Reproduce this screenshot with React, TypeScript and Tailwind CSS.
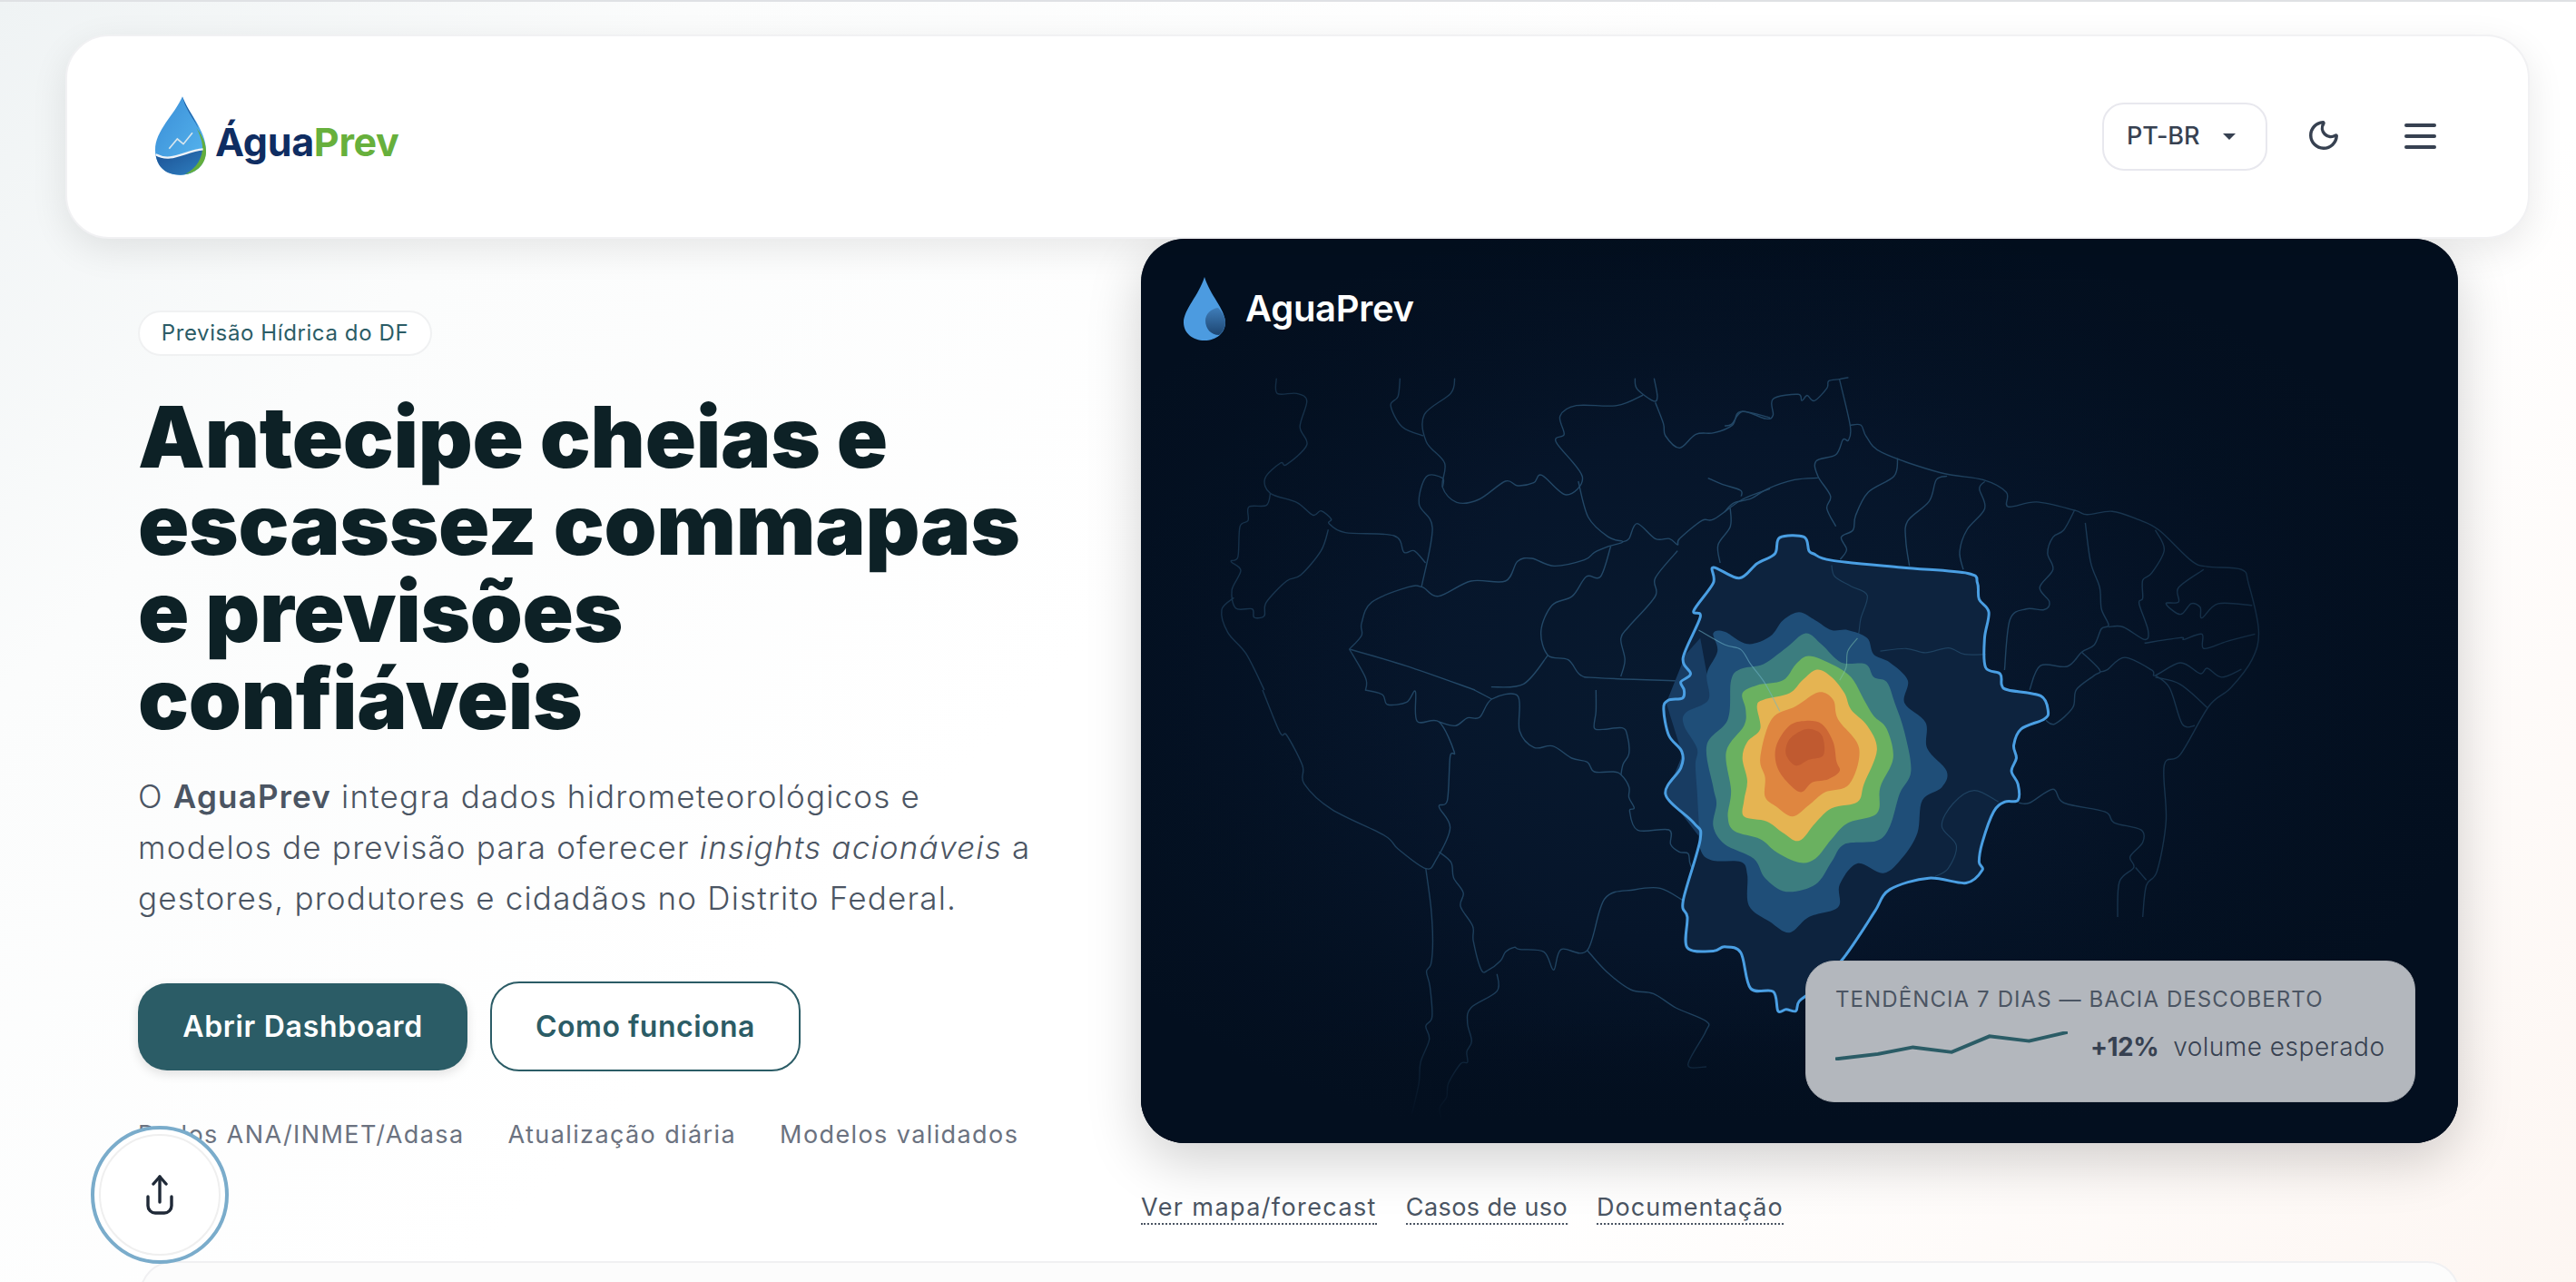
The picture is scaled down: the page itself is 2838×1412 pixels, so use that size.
import { Moon } from "lucide-react";

type Pt = [number, number];

// catmull-rom through the traced points
const smooth = (pts: Pt[], closed = false) => {
  const n = pts.length;
  const at = (i: number) => (closed ? pts[(i + n) % n] : pts[Math.max(0, Math.min(n - 1, i))]);
  let d = `M${pts[0][0]} ${pts[0][1]}`;
  const last = closed ? n : n - 1;
  for (let i = 0; i < last; i++) {
    const p0 = at(i - 1);
    const p1 = at(i);
    const p2 = at(i + 1);
    const p3 = at(i + 2);
    const c1x = p1[0] + (p2[0] - p0[0]) / 6;
    const c1y = p1[1] + (p2[1] - p0[1]) / 6;
    const c2x = p2[0] - (p3[0] - p1[0]) / 6;
    const c2y = p2[1] - (p3[1] - p1[1]) / 6;
    d += ` C${c1x.toFixed(1)} ${c1y.toFixed(1)} ${c2x.toFixed(1)} ${c2y.toFixed(1)} ${p2[0]} ${p2[1]}`;
  }
  return closed ? d + "Z" : d;
};

const westLines: Pt[][] = [
  [[350,470],[352,520],[400,520],[425,545],[408,630],[425,690],[375,755],[360,750],[322,800],[335,850],[400,880],[440,922],[460,908],[485,935],[480,950],[520,980],[640,990],[665,1045],[690,1040],[718,1080]],
  [[335,850],[325,890],[282,895],[280,940],[260,960],[255,1060],[238,1075],[262,1105],[240,1170],[250,1230],[290,1232],[295,1260],[320,1255],[325,1210],[375,1140],[410,1120],[460,1040],[478,970]],
  [[245,1195],[215,1235],[230,1310],[275,1380],[320,1500]],
  [[655,470],[650,530],[632,560],[660,630],[712,660]],
  [[790,470],[780,520],[715,590],[720,680],[765,750],[760,830],[795,880],[850,870],[915,810],[945,825],[985,815],[1005,790],[1065,855],[1105,795],[1040,680],[1060,655],[1050,595],[1090,560],[1190,560],[1255,525]],
  [[760,830],[760,800],[720,795],[702,885],[735,965],[708,1160]],
  [[1235,470],[1240,505],[1280,545],[1290,530],[1282,470]],
  [[1285,550],[1305,620],[1310,660],[1345,700],[1385,655],[1430,650],[1475,625],[1495,580],[1568,600]],
  [[1095,810],[1120,930],[1170,995],[1205,1010],[1170,1025],[1135,1045],[1110,1070],[1035,1090],[980,1065],[945,1075],[915,1140],[830,1140],[750,1190],[710,1160],[675,1160],[585,1210],[560,1280],[560,1320],[530,1365]],
  [[1205,1010],[1220,1000],[1240,950],[1285,1000],[1320,1000],[1340,1020],[1345,1000],[1400,940],[1430,935],[1500,870],[1568,835]],
  [[1175,1025],[1150,1125],[1115,1125],[1080,1190],[1030,1220],[1003,1305],[1020,1385],[1070,1400],[1100,1450],[1145,1460],[1345,1470]],
  [[530,1365],[670,1420],[840,1500]],
  [[530,1365],[570,1460],[570,1500]],
  [[1020,1385],[960,1480],[880,1490]],
  [[1340,1040],[1285,1130],[1285,1190],[1220,1290],[1200,1330],[1210,1400],[1200,1455]],
  [[1470,900],[1470,960],[1440,1020],[1445,1080]],
  [[1415,800],[1450,820],[1495,840],[1497,860]],
];

const southLines: Pt[][] = [
  [[290,0],[340,140],[360,150],[405,250],[410,310],[490,395],[640,480],[680,525],[760,590],[790,560],[830,455],[798,385],[822,365],[830,220],[842,205],[798,105],[735,103],[730,5],[705,40],[650,48],[635,15],[585,0]],
  [[798,105],[845,118],[880,92],[915,90],[950,30],[1025,20],[1030,135],[1072,190],[1125,185],[1180,225],[1225,238],[1245,270],[1300,270],[1322,280],[1345,320],[1345,355],[1360,390],[1347,400],[1370,463],[1460,462],[1465,510],[1490,535],[1515,540],[1520,570],[1527,590]],
  [[1322,280],[1328,245],[1345,210],[1340,150],[1325,125],[1270,130],[1245,125],[1250,70],[1250,0]],
  [[760,590],[775,720],[780,830],[775,905],[762,930],[772,980],[778,1080],[760,1110],[770,1155],[745,1230],[740,1300],[720,1400]],
  [[798,535],[833,570],[840,620],[868,670],[860,715],[895,780],[897,830],[920,925],[940,925],[975,895],[990,865],[1015,850],[1030,857],[1100,865],[1128,925],[1150,857],[1225,860],[1275,690],[1360,660],[1435,655],[1500,695]],
  [[1225,860],[1280,930],[1350,990],[1415,1003],[1480,1050],[1568,1095],[1565,1130],[1515,1238],[1568,1245]],
  [[965,938],[965,995],[890,1050],[880,1100],[892,1160],[878,1195],[880,1230],[860,1235],[825,1300],[820,1345],[800,1380],[805,1415]],
  [[950,30],[900,0]],
];

const eastLines: Pt[][] = [
  [[345,65],[320,70],[290,75],[285,95],[250,130],[230,115],[215,130],[205,112],[135,125],[135,170],[115,180],[50,160],[20,195],[0,200]],
  [[320,70],[350,200],[345,240],[330,238],[310,280],[255,298],[260,340],[295,395],[285,430],[310,480]],
  [[350,198],[380,198],[395,230],[440,275],[600,330],[720,350],[785,385],[790,425],[870,412],[975,435],[1010,447],[1080,438],[1150,460],[1210,490],[1300,575],[1345,592],[1440,600],[1460,640],[1488,770],[1470,850],[1410,930],[1350,980],[1270,1115],[1225,1145],[1230,1300],[1205,1440],[1175,1480],[1165,1568]],
  [[260,345],[195,350],[120,375],[75,402],[25,415],[0,440]],
  [[482,290],[472,340],[400,385],[365,450],[358,490],[325,510],[340,545],[322,572]],
  [[620,340],[590,350],[570,410],[510,465],[505,520],[515,590]],
  [[725,355],[710,375],[725,430],[675,490],[655,550],[665,600]],
  [[975,435],[945,490],[915,510],[900,555],[915,600],[878,650],[905,690],[890,712],[840,710],[795,740],[780,880]],
  [[1005,470],[1020,580],[1045,650],[1050,710],[1070,755],[1050,765],[1030,810],[995,830],[955,870],[880,868],[850,935]],
  [[1200,490],[1225,545],[1190,610],[1165,630],[1165,680],[1155,695],[1180,770],[1170,795],[1110,760],[1070,760]],
  [[1335,600],[1265,650],[1265,690],[1230,695],[1270,725],[1300,695],[1325,705],[1330,735],[1375,695],[1470,700]],
  [[1170,805],[1270,790],[1280,795],[1330,780],[1335,820],[1400,800],[1478,780]],
  [[995,830],[1045,880],[1030,895],[980,935],[970,985],[920,1030],[895,1020]],
  [[1045,885],[1065,880],[1115,845],[1190,880],[1200,895],[1270,860],[1325,890],[1345,875],[1385,900],[1440,878]],
  [[1200,895],[1240,930],[1275,1030],[1310,1035]],
  [[1200,900],[1270,920],[1345,985]],
  [[820,1250],[850,1250],[915,1212],[945,1250],[1060,1275],[1085,1305],[1160,1325],[1165,1360],[1130,1400],[1140,1430],[1100,1470],[1095,1568]],
  [[1145,1430],[1175,1465]],
];

const basin: Pt[] = [[590,90],[665,88],[680,130],[695,140],[750,160],[965,182],[1170,200],[1200,230],[1205,280],[1235,320],[1222,400],[1225,490],[1270,510],[1275,545],[1295,560],[1395,578],[1418,625],[1405,650],[1335,680],[1312,730],[1320,770],[1305,810],[1325,850],[1325,900],[1285,905],[1250,935],[1215,1030],[1205,1090],[1215,1115],[1165,1155],[1050,1140],[930,1175],[885,1240],[840,1310],[780,1395],[700,1480],[650,1520],[640,1550],[610,1545],[585,1550],[570,1490],[500,1480],[470,1370],[420,1352],[385,1365],[305,1355],[305,1260],[292,1210],[345,1020],[325,970],[238,882],[285,800],[288,750],[248,700],[232,620],[245,592],[290,585],[295,560],[285,535],[315,510],[292,460],[345,335],[325,315],[385,230],[385,182],[465,215],[520,170],[575,140]];

const basinInner: Pt[][] = [
  [[750,175],[760,210],[810,240],[860,268],[840,340],[830,400],[800,440],[775,530]],
  [[900,440],[980,432],[1040,445],[1110,430],[1160,450],[1225,450]],
  [[1265,905],[1190,870],[1125,910],[1090,980],[1135,1040],[1110,1110],[1070,1135]],
];

const contours: { fill: string; pts: Pt[] }[] = [
  { fill: "#1f4e78", pts: [[650,320],[700,345],[750,375],[800,375],[860,400],[880,450],[930,475],[985,530],[975,600],[1040,660],[1045,740],[1105,810],[1090,860],[1030,900],[1015,1000],[970,1075],[910,1125],[830,1095],[775,1160],[770,1230],[680,1260],[620,1308],[560,1275],[495,1225],[490,1130],[470,1090],[380,1085],[345,1050],[340,960],[335,870],[330,790],[335,740],[295,670],[300,630],[370,590],[365,510],[398,440],[385,385],[420,380],[490,418],[560,395],[600,345]] },
  { fill: "#3c7d7f", pts: [[670,385],[720,420],[780,475],[855,480],[880,520],[920,535],[945,600],[975,690],[995,810],[960,880],[930,980],[890,1025],[790,1035],[750,1090],[700,1160],[610,1182],[545,1140],[510,1080],[420,1035],[385,980],[395,910],[385,860],[365,730],[430,650],[440,530],[470,495],[540,480],[610,430]] },
  { fill: "#6ab160", pts: [[680,455],[750,480],[810,520],[850,590],[880,640],[920,680],[940,770],[900,860],[890,940],[800,970],[750,1020],[700,1080],[650,1092],[580,1060],[530,1020],[450,995],[430,950],[440,870],[425,750],[480,670],[485,620],[475,570],[520,545],[600,530],[640,480]] },
  { fill: "#e5b452", pts: [[705,497],[750,520],[790,570],[810,620],[860,670],[890,745],[850,850],[830,905],[750,925],[700,970],[650,1025],[600,1000],[550,965],[480,950],[480,900],[490,840],[475,770],[490,720],[530,680],[520,610],[540,590],[620,570],[660,530]] },
  { fill: "#df8640", pts: [[710,567],[755,590],[770,650],[835,740],[805,850],[730,875],[680,915],[630,950],[580,920],[545,890],[545,830],[530,770],[565,650],[640,610]] },
  { fill: "#cd6735", pts: [[670,655],[720,665],[755,720],[765,780],[775,810],[740,835],[690,845],[655,875],[610,840],[580,790],[580,730],[620,670]] },
  { fill: "#c05a30", pts: [[680,680],[720,700],[725,760],[680,775],[640,793],[610,760],[615,720],[640,695]] },
];

const NetLines = ({ lines, transform }: { lines: Pt[][]; transform: string }) => (
  <g transform={transform} fill="none" stroke="#234867" strokeWidth="1.4">
    {lines.map((l, i) => (
      <path key={i} d={smooth(l)} vectorEffect="non-scaling-stroke" />
    ))}
  </g>
);

const MapArt = () => {
  const zoom = "translate(1750 560) scale(.35714)";
  return (
    <svg viewBox="1257 263 1451 996" className="absolute inset-0 w-full h-full">
      <defs>
        <radialGradient id="fade" gradientUnits="userSpaceOnUse" cx="1880" cy="760" r="820">
          <stop offset="0.35" stopColor="#030f1f" stopOpacity="0" />
          <stop offset="1" stopColor="#030f1f" stopOpacity="0.85" />
        </radialGradient>
        <linearGradient id="bottomFade" x1="0" y1="0" x2="0" y2="1">
          <stop offset="0" stopColor="#030f1f" stopOpacity="0" />
          <stop offset="1" stopColor="#030f1f" />
        </linearGradient>
      </defs>
      <NetLines lines={westLines} transform="translate(1250 260) scale(.44643 .33333)" />
      <NetLines lines={southLines} transform="translate(1280 760) scale(.38265 .33333)" />
      <NetLines lines={eastLines} transform="translate(1900 390) scale(.39541)" />
      <rect x="1257" y="263" width="1451" height="996" fill="url(#fade)" />
      <rect x="1257" y="1120" width="1451" height="115" fill="url(#bottomFade)" />
      <rect x="1257" y="1235" width="1451" height="24" fill="#030f1f" />

      <g transform={zoom}>
        <path d={smooth(basin, true)} fill="#0d233e" />
        <path d="M345 400 L300 450 L240 600 L290 760 L240 880 L340 1010 L400 700 Z" fill="#183c62" />
        <g fill="none" stroke="#1e4160" strokeWidth="1.2">
          {basinInner.map((l, i) => (
            <path key={i} d={smooth(l)} vectorEffect="non-scaling-stroke" />
          ))}
        </g>
        {contours.map((c) => (
          <path key={c.fill} d={smooth(c.pts, true)} fill={c.fill} />
        ))}
        <path d={smooth([[340,375],[420,420],[470,435],[500,480],[545,540],[590,625]])} fill="none" stroke="#6fb4c9" strokeOpacity="0.55" strokeWidth="1.2" vectorEffect="non-scaling-stroke" />
        <path d={smooth([[830,400],[800,440],[795,490],[775,530]])} fill="none" stroke="#7fc7b0" strokeOpacity="0.5" strokeWidth="1.2" vectorEffect="non-scaling-stroke" />
        <path d={smooth(basin, true)} fill="none" stroke="#4a9fe3" strokeWidth="3" strokeLinejoin="round" vectorEffect="non-scaling-stroke" />
      </g>
    </svg>
  );
};

const BrandDrop = () => (
  <svg viewBox="332 268 168 259" className="w-[56px] h-[87px] shrink-0">
    <defs>
      <linearGradient id="dropTop" x1="0" y1="0" x2="1" y2="1">
        <stop offset="0" stopColor="#3a8dd6" />
        <stop offset="1" stopColor="#58b8f0" />
      </linearGradient>
      <linearGradient id="dropBottom" x1="0" y1="0" x2="1" y2="1">
        <stop offset="0" stopColor="#1a4f92" />
        <stop offset="1" stopColor="#2f7fc0" />
      </linearGradient>
    </defs>
    <path d="M422 268 C440 320 500 380 500 445 C500 495 465 527 415 527 C365 527 332 495 332 445 C332 380 395 330 422 268Z" fill="url(#dropTop)" />
    <path d="M422 268 C432 320 480 360 486 410 C470 340 440 320 422 268Z" fill="#1f5ba0" />
    <path d="M334 462 C380 490 430 445 492 440 C500 480 470 527 415 527 C365 527 340 500 334 462Z" fill="url(#dropBottom)" />
    <path d="M468 372 C490 400 500 425 500 450 C500 490 470 520 430 525 C470 505 490 470 488 430 C486 410 478 390 468 372Z" fill="#63ad3d" />
    <path d="M334 460 C385 488 430 447 490 442" fill="none" stroke="#eef3f8" strokeWidth="7" />
    <path d="M378 440 L405 408 L425 425 L455 388" fill="none" stroke="#d8e6ee" strokeWidth="5" />
  </svg>
);

const ShareUp = () => (
  <svg viewBox="0 0 30 44" className="w-[30px] h-[44px]" fill="none" stroke="#1f2937" strokeWidth="3.4" strokeLinecap="round" strokeLinejoin="round">
    <path d="M15 2v28" />
    <path d="M8 10l7-8 7 8" />
    <path d="M2 24v10a8 8 0 0 0 8 8h10a8 8 0 0 0 8-8V24" />
  </svg>
);

const Navbar = () => (
  <header className="relative z-10 ml-[72px] mr-[51px] mt-[36px] h-[225px] rounded-[48px] border-2 border-[#f1f1f3] bg-white shadow-[0_12px_40px_rgba(0,0,0,0.09)] flex items-center justify-between pl-[97px] pr-[101px]">
    <div className="flex items-center gap-[10px] -mt-[2px]">
      <BrandDrop />
      <span className="mt-[14px] text-[43px] font-bold tracking-[-0.3px] text-[#0f2d62]">
        Água<span className="text-[#67b03c]">Prev</span>
      </span>
    </div>
    <div className="flex items-center">
      <button className="w-[182px] h-[75px] rounded-[24px] border-2 border-[#e8e8ee] flex items-center pl-[25px] gap-[26px] text-[27px] font-medium tracking-[-0.1px] text-[#374151]">
        PT-BR
        <span className="border-x-[7px] border-t-[7px] border-x-transparent border-t-[#374151]" />
      </button>
      <Moon size={38} strokeWidth={2.2} className="ml-[43px] -mt-[4px] text-[#374151]" />
      <div className="ml-[70px] -mt-[2px] w-[35px] flex flex-col gap-[8px]">
        <div className="h-[4px] rounded-full bg-[#374151]" />
        <div className="h-[4px] rounded-full bg-[#374151]" />
        <div className="h-[4px] rounded-full bg-[#374151]" />
      </div>
    </div>
  </header>
);

const Hero = () => (
  <div className="w-[1257px] pl-[152px] pt-[79px] shrink-0">
    <span className="inline-flex h-[50px] w-[324px] items-center justify-center rounded-full border-2 border-[#f0f1f2] bg-white text-[24px] tracking-[0.6px] text-[#2b5c66]">
      Previsão Hídrica do DF
    </span>
    <h1 className="mt-[41px] text-[93px] leading-[96px] font-black tracking-[-0.3px] text-[#0d2126] whitespace-nowrap">
      Antecipe cheias e
      <br />
      escassez commapas
      <br />
      e previsões
      <br />
      confiáveis
    </h1>
    <p className="mt-[32px] text-[35px] leading-[56px] font-light tracking-[1.2px] text-[#4b5563] whitespace-nowrap">
      O <strong className="font-semibold">AguaPrev</strong> integra dados hidrometeorológicos e
      <br />
      modelos de previsão para oferecer <em>insights acionáveis</em> a
      <br />
      gestores, produtores e cidadãos no Distrito Federal.
    </p>
    <div className="mt-[64px] flex items-center gap-[25px]">
      <button className="w-[363px] h-[96px] rounded-[32px] bg-[#2b5c66] text-[32px] font-semibold tracking-[0.7px] text-white shadow-[0_4px_12px_rgba(0,0,0,0.12)]">
        Abrir Dashboard
      </button>
      <button className="w-[342px] h-[99px] rounded-[32px] border-2 border-[#2b5c66] bg-white text-[32px] font-semibold tracking-[0.5px] text-[#2b5c66]">
        Como funciona
      </button>
    </div>
    <div className="mt-[50px] flex gap-[48px] text-[27px] tracking-[1.4px] text-[#6b7280] whitespace-nowrap">
      <span>Dados ANA/INMET/Adasa</span>
      <span>Atualização diária</span>
      <span>Modelos validados</span>
    </div>
  </div>
);

const TrendPanel = () => (
  <div className="absolute right-[47px] bottom-[45px] w-[672px] h-[156px] rounded-[32px] border border-[#a9adb3] bg-[#b3b7bd] pl-[32px] pt-[26px]">
    <div className="text-[24px] leading-[32px] tracking-[1.1px] text-[#4b5563] whitespace-nowrap">TENDÊNCIA 7 DIAS — BACIA DESCOBERTO</div>
    <div className="mt-[13px] flex items-center">
      <svg viewBox="238 330 500 84" className="w-[256px] h-[32px]" fill="none" stroke="#2b5c66" strokeWidth="10" preserveAspectRatio="none">
        <polyline points="238,410 330,395 405,376 488,390 570,344 655,358 738,332" />
      </svg>
      <span className="ml-[25px] mt-[2px] text-[28px] font-bold tracking-[-0.5px] text-[#374151]">+12%</span>
      <span className="ml-[16px] mt-[2px] text-[28px] font-light tracking-[0.5px] text-[#374151]">volume esperado</span>
    </div>
  </div>
);

export default function App() {
  return (
    <div className="relative h-[1412px] overflow-hidden border-t-2 border-[#dfe1e4] bg-[linear-gradient(135deg,#eff3f4_0%,#fbfcfc_18%,#ffffff_45%,#ffffff_70%,#fdf6f2_100%)] font-['Inter',sans-serif]">
      <Navbar />
      <main className="flex">
        <Hero />
        <div className="w-[1451px] shrink-0">
          <div className="relative h-[996px] overflow-hidden rounded-[48px] bg-[radial-gradient(ellipse_at_45%_50%,#081a30_0%,#06152a_40%,#030f1f_75%)] shadow-[0_20px_60px_rgba(0,0,0,0.18)]">
            <MapArt />
            <div className="relative flex items-center gap-[22px] pl-[47px] pt-[42px]">
              <svg viewBox="0 0 46 70" className="w-[46px] h-[70px]">
                <defs>
                  <linearGradient id="cardDrop" x1="0" y1="0" x2="0" y2="1">
                    <stop offset="0" stopColor="#3f7db9" />
                    <stop offset="1" stopColor="#1d4672" />
                  </linearGradient>
                </defs>
                <path d="M23 0C29 20 46 36 46 50C46 62 36 70 23 70C10 70 0 62 0 50C0 36 17 20 23 0Z" fill="#4c9be0" />
                <path d="M38 34C44 40 46 46 46 50C46 56 43 61 39 64C30 64 24 57 24 48C24 41 30 35 38 34Z" fill="url(#cardDrop)" />
              </svg>
              <span className="text-[40px] font-semibold tracking-[-0.3px] text-white">AguaPrev</span>
            </div>
            <TrendPanel />
          </div>
          <div className="mt-[54px] flex gap-[32px] text-[27px] leading-[34px] text-[#4b5563] whitespace-nowrap">
            <a className="border-b-2 border-dotted border-[#4b5563] tracking-[1.4px]">Ver mapa/forecast</a>
            <a className="border-b-2 border-dotted border-[#4b5563] tracking-[0.4px]">Casos de uso</a>
            <a className="border-b-2 border-dotted border-[#4b5563] tracking-[1px]">Documentação</a>
          </div>
        </div>
      </main>
      <div className="ml-[154px] mt-[40px] h-[120px] w-[2556px] rounded-[36px] border-2 border-[#f0f0f2] bg-[#fcfcfc]" />
      <button className="absolute left-[100px] top-[1238px] w-[152px] h-[152px] rounded-full border-4 border-[#7aaccb] bg-white p-[5px]">
        <span className="flex h-full w-full items-center justify-center rounded-full border-2 border-[#efefef]">
          <ShareUp />
        </span>
      </button>
    </div>
  );
}
